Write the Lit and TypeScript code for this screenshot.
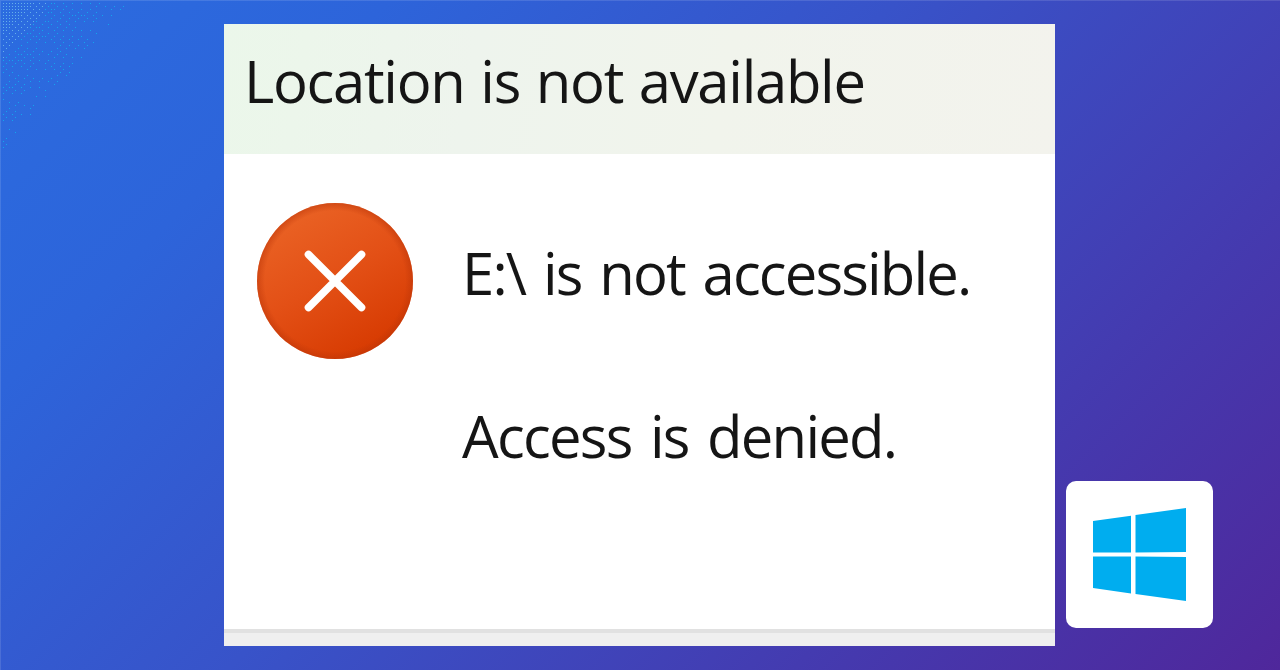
import { LitElement, html, svg, css } from 'lit';
import { customElement, property } from 'lit/decorators.js';

type Speck = { x: number; y: number; near: boolean };

// fine grain that thins out along the diagonal of the top left corner
function cornerSpecks(): Speck[] {
  const specks: Speck[] = [];
  for (let row = 0; row < 50; row += 1) {
    for (let col = 0; col < 41; col += 1) {
      const x = 3 + col * 3;
      const y = 3 + row * 3;
      const reach = x / 132 + y / 152;
      const noise = (row * 7 + col * 5 + ((row * col) % 3)) % 16;
      const density = 0.4 * (1 - reach) + 0.12;
      const near = reach < 0.4;
      const keep = near ? (row + col) % 2 === 0 || reach < 0.25 : noise / 16 < density;
      if (reach < 1 && keep) {
        specks.push({ x, y, near });
      }
    }
  }
  return specks;
}

@customElement('error-icon')
export class ErrorIcon extends LitElement {
  render() {
    return html`
      <svg viewBox="0 0 158 158" aria-hidden="true">
        <defs>
          <linearGradient id="face" x1="0.2" y1="0.05" x2="0.7" y2="0.95">
            <stop offset="0" stop-color="#ea6325" />
            <stop offset="0.5" stop-color="#e35016" />
            <stop offset="1" stop-color="#d73b02" />
          </linearGradient>
          <radialGradient id="rim">
            <stop offset="0.9" stop-color="#b93408" stop-opacity="0" />
            <stop offset="1" stop-color="#b93408" stop-opacity="0.5" />
          </radialGradient>
        </defs>
        <circle cx="79" cy="79" r="78" fill="url(#face)" />
        <circle cx="79" cy="79" r="78" fill="url(#rim)" />
        <path
          d="M52.5 52.5 L105.5 105.5 M105.5 52.5 L52.5 105.5"
          fill="none"
          stroke="#fff"
          stroke-width="7.6"
          stroke-linecap="round"
        />
      </svg>
    `;
  }

  static styles = css`
    :host {
      display: block;
      width: 158px;
      height: 158px;
    }
    svg {
      display: block;
      width: 100%;
      height: 100%;
    }
  `;
}

@customElement('windows-badge')
export class WindowsBadge extends LitElement {
  render() {
    return html`
      <svg viewBox="0 0 93 93" aria-hidden="true">
        <path
          fill="#00adef"
          d="M0 13 L38 7.8 V44.6 H0 Z M42.5 7 L93 0 V44 L42.5 44.5 Z M0 48.5 H38 V85.5 L0 80 Z M42.5 48.5 L93 49 V93 L42.5 86 Z"
        />
      </svg>
    `;
  }

  static styles = css`
    :host {
      display: flex;
      align-items: center;
      justify-content: center;
      box-sizing: border-box;
      width: 147px;
      height: 147px;
      border-radius: 10px;
      background: #fff;
    }
    svg {
      display: block;
      width: 93px;
      height: 93px;
    }
  `;
}

@customElement('error-dialog')
export class ErrorDialog extends LitElement {
  @property({ type: String }) heading = '';

  @property({ type: String }) message = '';

  @property({ type: String }) reason = '';

  render() {
    return html`
      <header>${this.heading}</header>
      <main>
        <error-icon></error-icon>
        <div class="texts">
          <p class="message">${this.message}</p>
          <p class="reason">${this.reason}</p>
        </div>
      </main>
      <footer></footer>
    `;
  }

  static styles = css`
    :host {
      display: flex;
      flex-direction: column;
      box-sizing: border-box;
      width: 831px;
      height: 622px;
      background: #fff;
      color: #151515;
      font-family: 'Open Sans', 'Noto Sans', sans-serif;
      font-size: 58px;
      line-height: 80px;
      white-space: nowrap;
    }
    header {
      box-sizing: border-box;
      height: 130px;
      padding: 17px 0 0 20px;
      background: linear-gradient(100deg, #ebf7ea 0%, #eef4ed 30%, #f1f4ec 60%, #f3f3ed 100%);
      letter-spacing: -1.3px;
      word-spacing: 2px;
    }
    main {
      display: flex;
      flex: 1;
      gap: 48px;
      padding: 48px 0 0 32px;
    }
    p {
      margin: 0;
    }
    .texts {
      display: flex;
      flex-direction: column;
      gap: 83px;
      padding-top: 31px;
    }
    .message {
      letter-spacing: -1.85px;
      word-spacing: 4.5px;
    }
    .reason {
      letter-spacing: -1.75px;
      word-spacing: 5px;
    }
    footer {
      box-sizing: border-box;
      height: 17px;
      border-top: 4px solid #e1e1e1;
      background: #efefef;
    }
  `;
}

@customElement('app-root')
export class AppRoot extends LitElement {
  private specks = cornerSpecks();

  render() {
    return html`
      <svg class="grain" viewBox="0 0 132 152" aria-hidden="true">
        ${this.specks.map(
          speck => svg`<rect class=${speck.near ? 'near' : 'far'} x=${speck.x} y=${speck.y} width="1" height="1" />`
        )}
      </svg>
      <error-dialog
        heading="Location is not available"
        message="E:\\ is not accessible."
        reason="Access is denied."
      ></error-dialog>
      <windows-badge></windows-badge>
    `;
  }

  static styles = css`
    :host {
      position: relative;
      display: flex;
      align-items: flex-start;
      gap: 11px;
      box-sizing: border-box;
      width: 1280px;
      height: 670px;
      padding: 23px 0 0 223px;
      overflow: hidden;
      border-top: 1px solid rgba(255, 255, 255, 0.12);
      border-left: 1px solid rgba(255, 255, 255, 0.12);
      background: linear-gradient(
          135deg,
          #2b6ce0 0%,
          #2d64da 20%,
          #3853c9 46%,
          #443bb0 75%,
          #4f279b 100%
        )
        border-box;
    }
    .grain {
      position: absolute;
      top: -1px;
      left: -1px;
      width: 132px;
      height: 152px;
      shape-rendering: crispEdges;
    }
    .near {
      fill: #65b0ea;
    }
    .far {
      fill: #12a6ee;
    }
    windows-badge {
      margin-top: 457px;
    }
  `;
}
